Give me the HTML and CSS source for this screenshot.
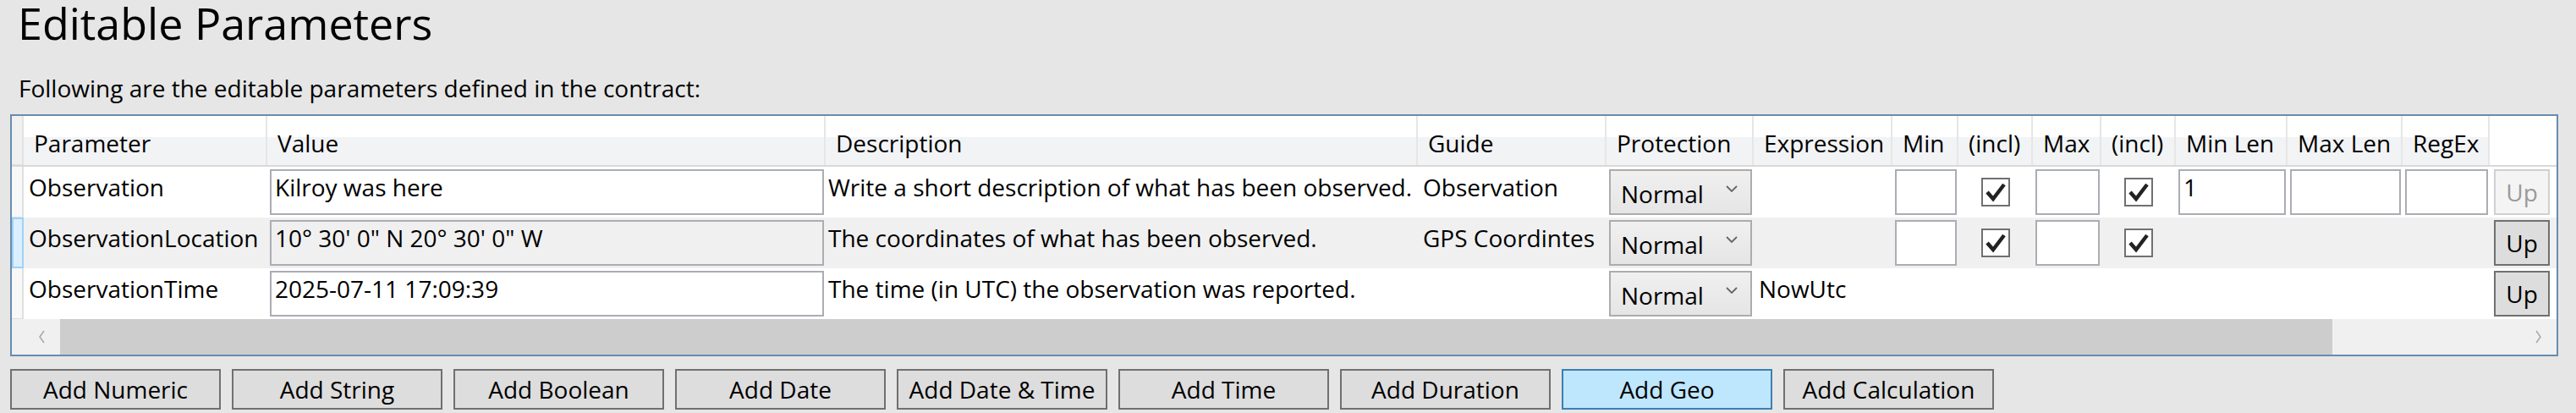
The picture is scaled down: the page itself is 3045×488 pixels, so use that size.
FILE: index.html
```
<!DOCTYPE HTML>
<html>
    <head>
        <meta charset="UTF-8">
        <title>Editable Parameters</title>
        <link rel="stylesheet" href="styles.css">
    </head>
    <body>
        <h1 class="title">Editable Parameters</h1>
        <p class="intro">Following are the editable parameters defined in the contract:</p>

        <div class="grid">
          <div class="row head">
            <div class="rh"></div>
            <div class="hc">Parameter</div>
            <div class="hc">Value</div>
            <div class="hc">Description</div>
            <div class="hc">Guide</div>
            <div class="hc">Protection</div>
            <div class="hc">Expression</div>
            <div class="hc">Min</div>
            <div class="hc">(incl)</div>
            <div class="hc">Max</div>
            <div class="hc">(incl)</div>
            <div class="hc">Min Len</div>
            <div class="hc">Max Len</div>
            <div class="hc">RegEx</div>
            <div class="filler"></div>
          </div>

          <div class="row">
            <div class="rh"></div>
            <div class="cell">Observation</div>
            <div class="ctl"><div class="tb">Kilroy was here</div></div>
            <div class="cell desc">Write a short description of what has been observed.</div>
            <div class="cell">Observation</div>
            <div class="ctl"><div class="combo"><span>Normal</span><svg width="14" height="8" viewBox="0 0 14 8"><polyline points="1,1 7,7 13,1" fill="none" stroke="#666" stroke-width="1.8"/></svg></div></div>
            <div class="cell"></div>
            <div class="ctl"><div class="tb"></div></div>
            <div class="chk"><span class="box"><svg width="30" height="30" viewBox="0 0 30 30"><polyline points="5,15 12,23 25,6" fill="none" stroke="#222" stroke-width="4.5"/></svg></span></div>
            <div class="ctl"><div class="tb"></div></div>
            <div class="chk"><span class="box"><svg width="30" height="30" viewBox="0 0 30 30"><polyline points="5,15 12,23 25,6" fill="none" stroke="#222" stroke-width="4.5"/></svg></span></div>
            <div class="ctl"><div class="tb">1</div></div>
            <div class="ctl"><div class="tb"></div></div>
            <div class="ctl"><div class="tb"></div></div>
            <div class="ctl up"><div class="rowbtn disabled">Up</div></div>
            <div class="ctl"><div class="rowbtn"></div></div>
          </div>

          <div class="row alt">
            <div class="rh selected"></div>
            <div class="cell">ObservationLocation</div>
            <div class="ctl"><div class="tb ro">10° 30' 0" N 20° 30' 0" W</div></div>
            <div class="cell desc">The coordinates of what has been observed.</div>
            <div class="cell">GPS Coordintes</div>
            <div class="ctl"><div class="combo"><span>Normal</span><svg width="14" height="8" viewBox="0 0 14 8"><polyline points="1,1 7,7 13,1" fill="none" stroke="#666" stroke-width="1.8"/></svg></div></div>
            <div class="cell"></div>
            <div class="ctl"><div class="tb"></div></div>
            <div class="chk"><span class="box"><svg width="30" height="30" viewBox="0 0 30 30"><polyline points="5,15 12,23 25,6" fill="none" stroke="#222" stroke-width="4.5"/></svg></span></div>
            <div class="ctl"><div class="tb"></div></div>
            <div class="chk"><span class="box"><svg width="30" height="30" viewBox="0 0 30 30"><polyline points="5,15 12,23 25,6" fill="none" stroke="#222" stroke-width="4.5"/></svg></span></div>
            <div class="cell"></div>
            <div class="cell"></div>
            <div class="cell"></div>
            <div class="ctl up"><div class="rowbtn">Up</div></div>
            <div class="ctl"><div class="rowbtn"></div></div>
          </div>

          <div class="row">
            <div class="rh"></div>
            <div class="cell">ObservationTime</div>
            <div class="ctl"><div class="tb">2025-07-11 17:09:39</div></div>
            <div class="cell desc">The time (in UTC) the observation was reported.</div>
            <div class="cell"></div>
            <div class="ctl"><div class="combo"><span>Normal</span><svg width="14" height="8" viewBox="0 0 14 8"><polyline points="1,1 7,7 13,1" fill="none" stroke="#666" stroke-width="1.8"/></svg></div></div>
            <div class="cell">NowUtc</div>
            <div class="cell"></div>
            <div class="cell"></div>
            <div class="cell"></div>
            <div class="cell"></div>
            <div class="cell"></div>
            <div class="cell"></div>
            <div class="cell"></div>
            <div class="ctl up"><div class="rowbtn">Up</div></div>
            <div class="ctl"><div class="rowbtn"></div></div>
          </div>

          <div class="hscroll">
            <div class="sb-pad"></div>
            <div class="sb-arrow"><svg width="9" height="16" viewBox="0 0 9 16"><polyline points="7,1 2,8 7,15" fill="none" stroke="#a6a6a6" stroke-width="1.5"/></svg></div>
            <div class="sb-thumb"></div>
            <div class="sb-track"></div>
            <div class="sb-arrow"><svg width="9" height="16" viewBox="0 0 9 16"><polyline points="2,1 7,8 2,15" fill="none" stroke="#a6a6a6" stroke-width="1.5"/></svg></div>
          </div>
        </div>

        <div class="actions">
          <button class="btn">Add Numeric</button>
          <button class="btn">Add String</button>
          <button class="btn">Add Boolean</button>
          <button class="btn">Add Date</button>
          <button class="btn">Add Date &amp; Time</button>
          <button class="btn">Add Time</button>
          <button class="btn">Add Duration</button>
          <button class="btn hover">Add Geo</button>
          <button class="btn">Add Calculation</button>
        </div>
    </body>
</html>
```
FILE: styles.css
```
body {
    margin: 0;
    padding: 0 0 0 12px;
    background: #e6e6e6;
    font-family: 'Open Sans', 'Noto Sans', sans-serif;
    color: #000;
    overflow: hidden;
}

.title {
    margin: 0 0 0 9px;
    font-size: 52px;
    font-weight: normal;
    line-height: 54px;
}
.intro {
    margin: 31px 0 0 10px;
    font-size: 28px;
    line-height: 38px;
}

/* the data grid */
.grid {
    margin-top: 12px;
    width: 3008px;
    border: 2px solid #688caf;
    background: #fff;
    overflow: hidden;
}
.row {
    display: grid;
    grid-template-columns: 14px 288px 660px 700px 223px 174px 164px 78px 88px 81px 88px 132px 136px 103px 77px 80px;
    height: 60px;
    font-size: 28px;
    line-height: 38px;
    white-space: nowrap;
}
.row.alt {background: #f0f0f0;}
.row.head {
    box-sizing: border-box;
    border-bottom: 2px solid #d8d8d8;
}
.head .rh {background: #f0f0f0; border-right: 2px solid #e2e2e2;}
.hc {
    padding: 13px 0 0 12px;
    background: linear-gradient(#fff 0 25px, #f2f3f5 25px);
    border-right: 2px solid #e6e6e6;
    overflow: hidden;
}
.filler {grid-column: span 2; background: #fff;}

.rh {
    box-sizing: border-box;
    background: #f8f8f8;
    border-right: 2px solid #e0e0e0;
    border-bottom: 1px solid #e0e0e0;
}
.rh.selected {
    background: #dcefff;
    border: 2px solid #9fd2f6;
}

.cell {padding: 5px 0 0 6px; overflow: hidden;}
.cell.desc {padding-left: 3px;}
.ctl {padding: 3px 2px 3px 3px; overflow: hidden;}
.ctl.up {padding: 3px 6px 3px 5px;}

.tb {
    box-sizing: border-box;
    height: 54px;
    border: 2px solid #abadb3;
    background: #fff;
    padding-left: 4px;
    overflow: hidden;
}
.tb.ro {background: transparent;}

.combo {
    box-sizing: border-box;
    height: 54px;
    display: flex;
    align-items: center;
    padding: 4px 15px 0 12px;
    border: 2px solid #acacac;
    background: linear-gradient(#f0f0f0, #e5e5e5);
}
.combo span {flex: 1;}
.combo svg {margin-top: -12px;}

.chk {display: flex; align-items: center; justify-content: center;}
.box {
    box-sizing: border-box;
    width: 34px;
    height: 34px;
    border: 2px solid #707070;
    background: #fff;
    display: flex;
    align-items: center;
    justify-content: center;
}

.rowbtn {
    box-sizing: border-box;
    height: 54px;
    padding-top: 6px;
    text-align: center;
    border: 2px solid #707070;
    background: #dddddd;
}
.rowbtn.disabled {
    border-color: #d0d0d0;
    background: #f4f4f4;
    color: #9a9a9a;
}

/* horizontal scroll bar */
.hscroll {display: flex; height: 42px; background: #f0f0f0;}
.sb-pad {width: 14px;}
.sb-arrow {width: 43px; display: flex; align-items: center; justify-content: center;}
.sb-arrow:last-child {width: 44px;}
.sb-thumb {width: 2686px; background: #cdcdcd;}
.sb-track {flex: 1;}

/* buttons below */
.actions {display: flex; gap: 13px; margin-top: 15px;}
.btn {
    box-sizing: border-box;
    width: 249px;
    height: 48px;
    padding: 0;
    border: 2px solid #707070;
    background: #dddddd;
    font-family: inherit;
    font-size: 28px;
    line-height: 38px;
    color: #000;
}
.btn.hover {background: #bee6fd; border-color: #3c7fb1;}
```
